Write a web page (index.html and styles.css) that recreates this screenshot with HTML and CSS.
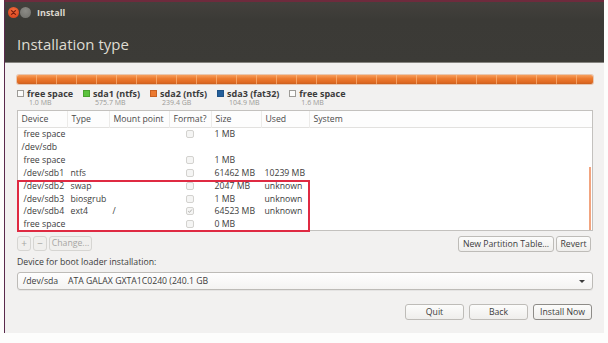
FILE: index.html
```html
<!DOCTYPE html>
<html>
<head>
<meta charset="utf-8">
<title>Install</title>
<link rel="stylesheet" href="styles.css">
</head>
<body>
<div class="window">
  <div class="header">
    <div class="titlebar">
      <span class="wbtn close"><svg width="11" height="11" viewBox="0 0 11 11"><path d="M3.6 3.6 L7.4 7.4 M7.4 3.6 L3.6 7.4" stroke="#7a1e10" stroke-width="1.3" stroke-linecap="round"/></svg></span>
      <span class="wbtn min"></span>
      <span class="wtitle">Install</span>
    </div>
    <h1 class="page-title">Installation type</h1>
  </div>
  <div class="content">
    <div class="diskbar"></div>
    <div class="legend">
      <div class="lg-item"><div class="lg-top"><span class="sw sw-free"></span><span class="lg-name">free space</span></div><div class="lg-size">1.0 MB</div></div>
      <div class="lg-item"><div class="lg-top"><span class="sw sw-green"></span><span class="lg-name">sda1 (ntfs)</span></div><div class="lg-size">575.7 MB</div></div>
      <div class="lg-item"><div class="lg-top"><span class="sw sw-orange"></span><span class="lg-name">sda2 (ntfs)</span></div><div class="lg-size">239.4 GB</div></div>
      <div class="lg-item"><div class="lg-top"><span class="sw sw-blue"></span><span class="lg-name">sda3 (fat32)</span></div><div class="lg-size">104.9 MB</div></div>
      <div class="lg-item"><div class="lg-top"><span class="sw sw-free"></span><span class="lg-name">free space</span></div><div class="lg-size">1.6 MB</div></div>
    </div>
    <div class="ptable">
      <div class="prow phead">
        <div class="c">Device</div><div class="c">Type</div><div class="c">Mount point</div><div class="c">Format?</div><div class="c">Size</div><div class="c">Used</div><div class="c">System</div>
      </div>
      <div class="prow"><div class="c child">free space</div><div class="c"></div><div class="c"></div><div class="c ck"><span class="box"></span></div><div class="c">1 MB</div><div class="c"></div><div class="c"></div></div>
      <div class="prow"><div class="c">/dev/sdb</div><div class="c"></div><div class="c"></div><div class="c"></div><div class="c"></div><div class="c"></div><div class="c"></div></div>
      <div class="prow"><div class="c child">free space</div><div class="c"></div><div class="c"></div><div class="c ck"><span class="box"></span></div><div class="c">1 MB</div><div class="c"></div><div class="c"></div></div>
      <div class="prow"><div class="c child">/dev/sdb1</div><div class="c">ntfs</div><div class="c"></div><div class="c ck"><span class="box"></span></div><div class="c">61462 MB</div><div class="c">10239 MB</div><div class="c"></div></div>
      <div class="prow"><div class="c child">/dev/sdb2</div><div class="c">swap</div><div class="c"></div><div class="c ck"><span class="box"></span></div><div class="c">2047 MB</div><div class="c">unknown</div><div class="c"></div></div>
      <div class="prow"><div class="c child">/dev/sdb3</div><div class="c">biosgrub</div><div class="c"></div><div class="c ck"><span class="box"></span></div><div class="c">1 MB</div><div class="c">unknown</div><div class="c"></div></div>
      <div class="prow"><div class="c child">/dev/sdb4</div><div class="c">ext4</div><div class="c">/</div><div class="c ck"><span class="box checked"><svg width="8" height="8" viewBox="0 0 8 8"><path d="M1.6 4.2 L3.3 5.8 L6.5 2" fill="none" stroke="#a9a8a5" stroke-width="1.2"/></svg></span></div><div class="c">64523 MB</div><div class="c">unknown</div><div class="c"></div></div>
      <div class="prow"><div class="c child">free space</div><div class="c"></div><div class="c"></div><div class="c ck"><span class="box"></span></div><div class="c">0 MB</div><div class="c"></div><div class="c"></div></div>
      <div class="hl-box"></div>
      <div class="scroll-ind"></div>
    </div>
    <div class="tools">
      <div class="tools-left">
        <button class="btn small disabled">+</button>
        <button class="btn small disabled">−</button>
        <button class="btn disabled change">Change...</button>
      </div>
      <div class="tools-right">
        <button class="btn newtable">New Partition Table...</button>
        <button class="btn revert">Revert</button>
      </div>
    </div>
    <div class="boot-label">Device for boot loader installation:</div>
    <div class="combo"><span class="combo-dev">/dev/sda</span><span class="combo-name">ATA GALAX GXTA1C0240 (240.1 GB</span><span class="combo-arrow"></span></div>
    <div class="actions">
      <button class="btn act">Quit</button>
      <button class="btn act">Back</button>
      <button class="btn act default">Install Now</button>
    </div>
  </div>
</div>
</body>
</html>
```
FILE: styles.css
```css
* { box-sizing: border-box; }
html, body { margin: 0; padding: 0; }
body {
  background: #fdfdfc;
  width: 608px;
  height: 343px;
  overflow: hidden;
  font-family: "Open Sans", "Noto Sans", sans-serif;
  color: #3c3c3c;
}
.window {
  margin-left: 4px;
  width: 600px;
  height: 333px;
  border-top: 2px solid #6e2b3d;
  border-left: 1px solid #5a2a4c;
  background: #f2f1f0;
  display: flex;
  flex-direction: column;
}
.header {
  height: 61px;
  background: linear-gradient(#43413d, #3b3a36 30%, #3c3b37);
  border-bottom: 1px solid #85847f;
  flex: none;
}
.titlebar {
  height: 21px;
  display: flex;
  align-items: center;
  padding-left: 3px;
}
.wbtn {
  width: 11px;
  height: 11px;
  border-radius: 50%;
  display: inline-flex;
  margin-right: 1px;
}
.close { background: radial-gradient(circle at 50% 35%, #f2703f, #dd4a22 70%, #c43f1c); }
.min { background: radial-gradient(circle at 50% 35%, #8c8b86, #6f6e69); }
.wtitle {
  margin-left: 5px;
  font-size: 9px;
  font-weight: bold;
  color: #dcd8cf;
}
.page-title {
  margin: 12px 0 0 12px;
  font-size: 15px;
  font-weight: normal;
  line-height: 18px;
  color: #dfdbd2;
}
.content {
  padding: 0 11px 0 12px;
  display: flex;
  flex-direction: column;
  flex: 1;
}
.diskbar {
  margin-top: 12px;
  height: 9px;
  border-radius: 2px;
  background:
    repeating-linear-gradient(90deg, transparent 0, transparent 19px, rgba(255,200,150,0.55) 19px, rgba(255,200,150,0.55) 20px),
    linear-gradient(#f7a05e, #ec7a2f 40%, #e06a22 80%, #c9601f);
  box-shadow: 0 0 0 1px rgba(214,120,60,0.35);
}
.legend {
  margin-top: 4px;
  display: flex;
  gap: 10px;
  height: 19px;
}
.lg-top {
  display: flex;
  align-items: center;
  height: 10px;
  font-size: 9px;
  font-weight: bold;
  color: #3c3c3c;
}
.sw {
  width: 7px;
  height: 7px;
  margin-right: 3px;
  border: 1px solid #9d9b97;
  background: #fbfbfa;
}
.sw-green { background: #5cc33d; border-color: #4aa22f; }
.sw-orange { background: #ec7a30; border-color: #c96122; }
.sw-blue { background: #245f9b; border-color: #1f5286; }
.lg-size {
  padding-left: 12px;
  font-size: 7px;
  line-height: 9px;
  color: #9b9a97;
}
.ptable {
  position: relative;
  margin-top: 3px;
  height: 121px;
  border: 1px solid #c3c1be;
  background: #fff;
  font-size: 8.7px;
}
.prow {
  display: grid;
  grid-template-columns: 49px 42px 60px 42px 50px 48px 1fr;
  height: 12.85px;
  align-items: center;
}
.prow .c {
  padding-left: 3.5px;
  white-space: nowrap;
  line-height: 12px;
}
.prow .c.child { padding-left: 5.5px; }
.phead {
  height: 17px;
  border-bottom: 1px solid #e2e1df;
  color: #4a4a4a;
  background: #fdfdfd;
}
.phead .c {
  height: 17px;
  line-height: 17px;
}
.phead .c + .c { border-left: 1px solid #ecebe9; }
.ck {
  display: flex;
  justify-content: center;
  padding-left: 0 !important;
}
.box {
  width: 8px;
  height: 8px;
  border: 1px solid #d3d2cf;
  border-radius: 2px;
  background: #f5f5f4;
  display: inline-flex;
  align-items: center;
  justify-content: center;
}
.box svg { display: block; }
.hl-box {
  position: absolute;
  left: -1px;
  top: 69px;
  width: 293px;
  height: 52px;
  border: 2px solid #df2a42;
}
.scroll-ind {
  position: absolute;
  right: 1px;
  top: 56px;
  bottom: 0;
  width: 2px;
  background: #f2a47f;
}
.tools {
  margin-top: 5px;
  display: flex;
  justify-content: space-between;
  height: 16px;
}
.tools-left, .tools-right { display: flex; gap: 2px; }
.btn {
  font-family: inherit;
  font-size: 8.7px;
  color: #3c3c3c;
  border: 1px solid #bebcb8;
  border-radius: 3px;
  background: linear-gradient(#fcfcfb, #efeeec);
  padding: 0;
  height: 15px;
  line-height: 13px;
  margin: 0;
}
.btn.small { width: 14px; font-size: 10px; }
.btn.disabled {
  color: #a6a5a2;
  border-color: #d6d5d2;
  background: #f0efed;
}
.btn.change { width: 43px; }
.btn.newtable { width: 96px; }
.btn.revert { width: 35px; margin-right: 2px; }
.tools-right .btn { height: 16px; }
.boot-label {
  margin-top: 5px;
  font-size: 8.7px;
  line-height: 10px;
  color: #3c3c3c;
}
.combo {
  margin-top: 5px;
  height: 18px;
  border: 1px solid #bdbbb7;
  border-radius: 3px;
  background: linear-gradient(#fefefe, #f4f3f2);
  display: flex;
  align-items: center;
  font-size: 8.7px;
  padding-left: 5px;
  box-shadow: 0 1px 0 rgba(0,0,0,0.05);
}
.combo-dev { width: 45px; }
.combo-name { flex: 1; }
.combo-arrow {
  width: 0;
  height: 0;
  border-left: 3px solid transparent;
  border-right: 3px solid transparent;
  border-top: 3.5px solid #3c3c3c;
  margin-right: 7px;
}
.actions {
  margin-top: 14px;
  display: flex;
  justify-content: flex-end;
  gap: 5px;
  padding-right: 1px;
}
.btn.act { width: 59px; height: 16px; }
.btn.default { border-color: #8e8c88; }
```
